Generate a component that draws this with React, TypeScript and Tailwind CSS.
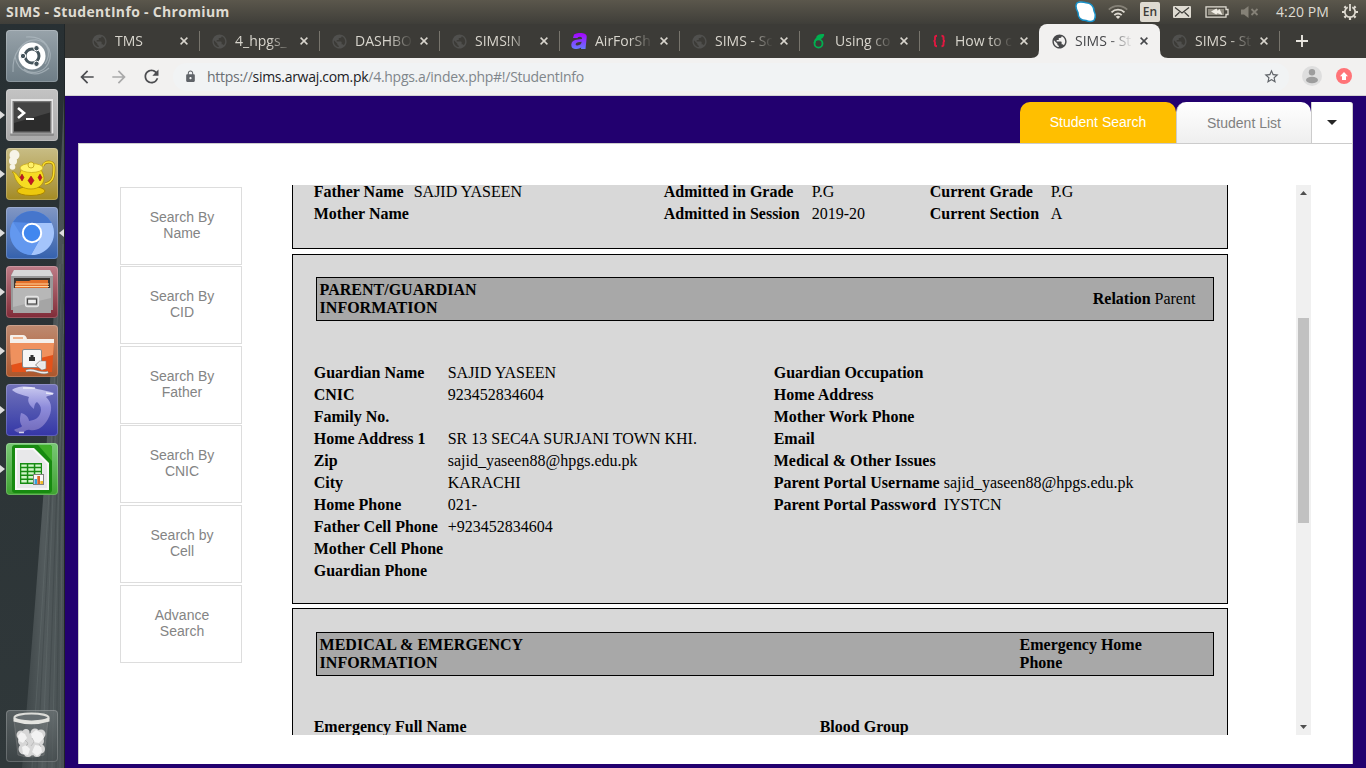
import React from "react";
import { MdPublic, MdLock, MdStarBorder, MdArrowBack, MdArrowForward, MdRefresh } from "react-icons/md";

/* ---------- System bar ---------- */

function SystemBar() {
  return (
    <header className="flex h-6 shrink-0 items-center justify-between bg-linear-to-b from-[#5b574c] to-[#3f3e39] pl-1.5 pr-2 font-['Open_Sans',sans-serif] text-[#dfdbd2]">
      <h1 className="text-[14px] leading-6 font-bold tracking-[0.32px]">SIMS - StudentInfo - Chromium</h1>
      <div className="flex h-6 items-center">
        <svg width="24" height="24" viewBox="0 0 24 24" className="mr-2.5">
          <path d="M3 3C6 .7 9 2.3 12 2.7c5 0 8 4 8 8.300 2 4 2 6 0 9.300-3 2-6 1-8 .2-5 0-8-3-8-8C1.500 8 1.500 5 3 3Z" fill="#fff" stroke="#1690c8" strokeWidth="1.500" />
        </svg>
        <svg width="20" height="24" viewBox="0 0 20 24" fill="none" strokeWidth="1.800" className="mr-3">
          <path d="M.8 9.700C6 4.600 14 4.600 19.200 9.700" stroke="#858177" />
          <path d="M3.500 12.400c3.700-3.600 9.300-3.600 13 0" stroke="#dfdbd2" />
          <path d="M6.300 15.200c2.200-2.100 5.200-2.100 7.400 0" stroke="#dfdbd2" />
          <path d="m10 19-2.300-2.300c1.300-1.200 3.300-1.200 4.600 0Z" fill="#dfdbd2" />
        </svg>
        <span className="mr-[13px] h-5 w-5 rounded-[2px] bg-[#dfdbd2] text-center text-[12px] leading-5 font-semibold text-[#3c3b37]">En</span>
        <svg width="18" height="12" viewBox="0 0 18 12" className="mr-3.5">
          <rect width="18" height="12" rx="1" fill="#dfdbd2" />
          <path d="m2 1.500 7 5.500 7-5.500M2 10.500l4.500-4.200M16 10.500l-4.500-4.200" stroke="#3c3b37" strokeWidth="1.200" fill="none" />
        </svg>
        <svg width="24" height="12" viewBox="0 0 24 12" className="mr-3">
          <path d="M1 .8h20v2.700h2v5h-2v2.700H1Z" fill="none" stroke="#dfdbd2" strokeWidth="1.300" />
          <path d="M3 3h16v6H3Z" fill="#8f8b80" />
          <path d="m6 5.500 5.500-3 1.200 2.300L14.500 3l3 6-5-1.800-1.300 1.300Z" fill="#f0ede5" />
        </svg>
        <svg width="18" height="12" viewBox="0 0 18 12" className="mr-[17px]">
          <path d="M0 3.500h3L7.500 0v12L3 8.500H0Z" fill="#858177" />
          <path d="m10.500 3 6 6m0-6-6 6" stroke="#858177" strokeWidth="1.800" />
        </svg>
        <span className="mr-[13px] w-[53px] text-[14px] leading-6 tracking-[0.1px] whitespace-nowrap">4:20 PM</span>
        <svg width="16" height="18" viewBox="-8 -9 16 18" fill="none" stroke="#dfdbd2">
          <path d="M-2.300-4.700a5.200 5.200 0 1 0 4.600 0" strokeWidth="1.800" />
          <path d="M0-8v7" strokeWidth="1.800" />
          <path d="M-5.500 0H-8M5.500 0H8M-4-4l-1.600-1.600M4-4l1.600-1.600M-4 4l-1.600 1.600M4 4l1.600 1.600M0 5.500V8" strokeWidth="2.200" />
        </svg>
      </div>
    </header>
  );
}

/* ---------- Launcher ---------- */

const Ubuntu = () => (
  <svg viewBox="0 0 52 52" className="h-full w-full">
    <path d="M7 42C6 24 16 9 31 10c11 2 15 13 8 24M20 7c18-2 29 13 22 27-5 9-17 11-24 5M9 26c2 16 20 24 34 12" fill="none" stroke="#b4bec5" strokeWidth="1.200" opacity=".65" />
    <circle cx="26" cy="26" r="13.500" fill="#fff" />
    <circle cx="26" cy="26" r="7" fill="none" stroke="#45545b" strokeWidth="3" />
    <g fill="#45545b" stroke="#fff" strokeWidth="1">
      <circle cx="17" cy="26" r="2.700" />
      <circle cx="30.500" cy="18.200" r="2.700" />
      <circle cx="30.500" cy="33.800" r="2.700" />
    </g>
  </svg>
);

const Terminal = () => (
  <svg viewBox="0 0 52 52" className="h-full w-full">
    <rect x="4" y="10" width="44" height="37" rx="1" fill="#8c8c8c" />
    <rect x="4.500" y="10" width="43" height="34.500" fill="#e6e6e6" />
    <rect x="6.500" y="12" width="39" height="32.500" fill="#777" />
    <rect x="8" y="13.500" width="36" height="29" fill="#2c2c2c" />
    <path d="M8 13.500h36v10L8 34Z" fill="#555" opacity=".6" />
    <path d="m12 19 6 5-6 5" fill="none" stroke="#fff" strokeWidth="2.600" />
    <path d="M20 30h8" stroke="#fff" strokeWidth="2" />
  </svg>
);

const Teapot = () => (
  <svg viewBox="0 0 52 52" className="h-full w-full">
    <path d="M37 18c1-5 11-6 11 1 0 8 0 15-9 17" fill="none" stroke="#a98400" strokeWidth="2.800" />
    <path d="M37 18c1-5 11-6 11 1 0 8 0 15-9 17" fill="none" stroke="#f8dd2e" strokeWidth="1.500" />
    <ellipse cx="25" cy="43" rx="14" ry="4.500" fill="#edc80d" stroke="#a98400" />
    <path d="M6 24c4-1 6 5 8 6-1-8 3-13 11-13s12 6 13 13c0 6-5 11-13 11s-12-4-15-9c-2-3-1-6-4-8Z" fill="#f6dc22" stroke="#b59408" strokeWidth=".8" />
    <ellipse cx="25.500" cy="20" rx="11.500" ry="4.500" fill="#fff266" stroke="#c8a510" strokeWidth=".7" />
    <circle cx="25" cy="17" r="3" fill="#fff06a" stroke="#b59408" strokeWidth=".7" />
    <path d="m25 28 3 4.500-3 4.500-3-4.500Zm-9-2 2 3.500-2 3.500-2-3.500Zm18 0 2 3.500-2 3.500-2-3.500Z" fill="#c51424" stroke="#841018" strokeWidth=".5" />
    <g fill="#f7f4e8"><circle cx="8.500" cy="7" r="5" /><circle cx="7" cy="13" r="4" /><circle cx="6.500" cy="19" r="2.800" /></g>
  </svg>
);

const Chromium = () => (
  <svg viewBox="0 0 52 52" className="h-full w-full">
    <circle cx="26" cy="26" r="22" fill="#568be5" />
    <path d="M7 15A22 22 0 0 1 45.600 16H26Z" fill="#4676cc" />
    <path d="M26 16h19.600A22 22 0 0 1 25 48l10-18Z" fill="#a4c4fb" />
    <path d="M7 15 17 31l16 3-8 14A22 22 0 0 1 7 15Z" fill="#6398ef" />
    <circle cx="26" cy="26" r="9.200" fill="#4187ef" stroke="#fff" strokeWidth="2" />
  </svg>
);

const Cabinet = () => (
  <svg viewBox="0 0 52 52" className="h-full w-full">
    <path d="M8 4h36l3 5v35H5V9Z" fill="#999" />
    <path d="M8 4h36l3 6H5Z" fill="#d8d8d8" />
    <path d="M8 12h36v10H8Z" fill="#3b3632" />
    <path d="M10 15h13l2-1h17v8H9Z" fill="#e4702a" />
    <path d="M9 18h34M9 20.500h34" stroke="#ffd6a0" />
    <path d="M7 22h38v25H7Z" fill="#a5a5a5" />
    <path d="M7 22h38v10L7 41Z" fill="#c3c3c3" opacity=".6" />
    <rect x="19.500" y="30.500" width="13" height="10" rx="2" fill="#b9b9b9" stroke="#e4e4e4" strokeWidth="1.300" />
    <rect x="21.500" y="33" width="9" height="5" fill="#eee" stroke="#4a4a4a" strokeWidth="1.200" />
  </svg>
);

const NetFolder = () => (
  <svg viewBox="0 0 52 52" className="h-full w-full">
    <path d="M4 11q0-1 1-1h12q3 0 4 4h27v6H4Z" fill="#f5f0eb" />
    <path d="M7 13h10" stroke="#eeb28d" strokeWidth="2" />
    <path d="M4 18h44l-2 29H6Z" fill="#e4521a" />
    <path d="M4 18h44l-1 12L5 40Z" fill="#f3ad7c" opacity=".7" />
    <rect x="16.500" y="24.500" width="19" height="18" rx="1.500" fill="#f6f6f6" stroke="#888" />
    <path d="M23 36v-4h1.500v-2h3v2H29v4Z" fill="#333" />
    <path d="M20 46c8-4 15 5 22 1M31 40l3-3h5v6l-3 1Z" fill="none" stroke="#8b8580" strokeWidth="2.600" />
    <path d="M20 46c8-4 15 5 22 1M31 40l3-3h5v6l-3 1Z" fill="#e8e8e8" stroke="#eee" strokeWidth="1.300" />
  </svg>
);

const Dolphin = () => (
  <svg viewBox="0 0 52 52" className="h-full w-full">
    <defs>
      <linearGradient id="dolphin" x1="0" y1="0" x2="0" y2="1">
        <stop offset="0" stopColor="#c9c9ef" />
        <stop offset=".45" stopColor="#8e8cdb" />
        <stop offset="1" stopColor="#716abb" />
      </linearGradient>
    </defs>
    <path d="M6 6c4-4 17-5 25-1 5 1 12 2 17 4-2 3-6 2-8 4 7 6 6 15 2 22-5 9-11 12-18 11-5-1-5 3-9 3-3 0-5-1-7-3 3-2 7-2 8-4-3-4-2-9-1-13 5 1 8 5 8 8 6-1 11-3 12-11 0-4-2-6-4-8-2 1-3 4-3 7-5-4-7-8-5-12C18 11 10 10 6 6Z" fill="url(#dolphin)" />
    <path d="M17 4h12M13 48.500h5M40 9l7 1" stroke="#fff" strokeWidth="1.500" opacity=".7" />
  </svg>
);

const Calc = () => (
  <svg viewBox="0 0 52 52" className="h-full w-full">
    <path d="M6 5q0-3 3-3h34q3 0 3 3v42q0 3-3 3H9q-3 0-3-3Z" fill="#178a10" />
    <path d="M32 2h11q3 0 3 3v13Z" fill="#3eae28" />
    <path d="M9 5h19l15 15v27H9Z" fill="#f7f7f7" />
    <path d="M11 7h16l14 14v24H11Z" fill="#e8e8ea" />
    <path d="M14 20h22v21H14Z" fill="#168b13" />
    <path d="M15.300 21.400h5.500v2.400h-5.500zm7 0h5.500v2.400h-5.500zm7 0h5.500v2.400h-5.500zM15.300 25.300h5.500v2.400h-5.500zm7 0h5.500v2.400h-5.500zm7 0h5.500v2.400h-5.500zM15.300 29.200h5.500v2.400h-5.500zm7 0h5.500v2.400h-5.500zm7 0h5.500v2.400h-5.500zM15.300 33.100h5.500v2.400h-5.500zm7 0h5.500v2.400h-5.500zM15.300 37h5.500v2.400h-5.500zm7 0h5.500v2.400h-5.500z" fill="#d0f5c8" />
    <rect x="27.500" y="31.500" width="10" height="10" fill="#f8f8f8" stroke="#808080" />
    <path d="M28.500 36h2.500v5h-2.500z" fill="#31a2df" /><path d="M31.300 33H34v8h-2.700z" fill="#d86428" /><path d="M34.300 38H37v3h-2.700z" fill="#f0ba28" />
  </svg>
);

const Trash = () => (
  <svg viewBox="0 0 52 52" className="h-full w-full">
    <path d="m8 10 4 35q12 4 26 0l4-35Z" fill="#aaa" fillOpacity=".15" stroke="#999" strokeOpacity=".35" />
    <g fill="#d6d6d6">
      <circle cx="15" cy="25" r="4.500" /><circle cx="20" cy="22.500" r="3.500" /><circle cx="29" cy="23" r="4.500" /><circle cx="35" cy="24" r="4.500" />
      <circle cx="17" cy="31" r="5" /><circle cx="25" cy="29" r="6" /><circle cx="33" cy="31" r="5" /><circle cx="18" cy="39" r="5.500" />
      <circle cx="26" cy="39" r="6.500" /><circle cx="34" cy="39" r="5" /><circle cx="22" cy="43" r="4" /><circle cx="31" cy="43" r="4" />
    </g>
    <g fill="#f2f2f2">
      <path d="m12 26 3-4 4 2 2 4-4 5-4-2Zm13-2 5-4 6 3 2 5-5 5-6-1Zm-9 13 4-2 4 4-2 6-5-1Zm13-2 6 1 1 6-5 4-5-4Z" />
    </g>
    <path d="m19 30 3 3-2 3m6-8 2 4-3 4m8-2 2 3" fill="none" stroke="#bcbcbc" />
    <ellipse cx="25.500" cy="7.500" rx="17" ry="4" fill="#666d70" stroke="#dcdcd8" strokeWidth="2.200" />
    <path d="M7.500 8v3.500q18 5.500 36 0V8q-18 6.500-36 0Z" fill="#e4e4e0" />
  </svg>
);

const launcherApps = [
  { name: "Dash", icon: Ubuntu, tile: "from-[#98a3aa] to-[#6e7d86]", running: false, focused: false },
  { name: "Terminal", icon: Terminal, tile: "from-[#c3c3c3] to-[#a9a9a9]", running: true, focused: false },
  { name: "Teapot", icon: Teapot, tile: "from-[#c8bd85] to-[#a48b20]", running: true, focused: false },
  { name: "Chromium", icon: Chromium, tile: "from-[#8297c4] to-[#3461ad]", running: true, focused: true },
  { name: "Files", icon: Cabinet, tile: "from-[#bd7c87] to-[#802b38]", running: true, focused: false },
  { name: "Network folder", icon: NetFolder, tile: "from-[#bd8a70] to-[#ac562b]", running: true, focused: false },
  { name: "Workbench", icon: Dolphin, tile: "from-[#7373ba] to-[#3535a6]", running: true, focused: false },
  { name: "Spreadsheet", icon: Calc, tile: "from-[#79c875] to-[#3da22f]", running: true, focused: false },
];

function Launcher() {
  return (
    <aside className="relative flex w-[65px] shrink-0 flex-col justify-between overflow-hidden bg-linear-to-b from-[#283033] to-[#30383a] pt-1.5 pb-1.5">
      <svg className="absolute inset-0 h-full w-full" viewBox="0 0 65 744" preserveAspectRatio="none">
        <defs>
          <linearGradient id="curtain" x1="0" x2="1"><stop stopColor="#3c4446" /><stop offset=".5" stopColor="#525a5c" /><stop offset="1" stopColor="#495153" /></linearGradient>
        </defs>
        <path d="M65 50 57 230 45 450 35 580 22 744h43Z" fill="url(#curtain)" />
        <path d="M60 240 49 470 32 744M63 220 53 470 42 744M64 280 58 490 52 744M64.500 320 62 500 60 744" fill="none" stroke="#6a7274" opacity=".4" />
        <path d="M62 240 51 470 37 744M64 260 56 490 47 744M64 310 60 490 56 744" fill="none" stroke="#3c4446" opacity=".5" />
        <path d="M64.500 0v744" stroke="#202628" />
      </svg>
      <nav className="relative flex flex-col gap-[7px]">
        {launcherApps.map(({ name, icon: Icon, tile, running, focused }) => (
          <div key={name} className="flex h-[52px] items-center">
            <span className="w-1.5">
              {running && <svg width="5" height="8" viewBox="0 0 5 8" className="block"><path d="m0 0 5 4-5 4Z" fill="#ddd" /></svg>}
            </span>
            <div className={`h-[52px] w-[52px] overflow-hidden rounded-[4px] bg-linear-to-b ring-1 ring-white/20 ring-inset ${tile}`}><Icon /></div>
            {focused && <svg width="5" height="8" viewBox="0 0 5 8" className="ml-px block"><path d="m5 0-5 4 5 4Z" fill="#ddd" /></svg>}
          </div>
        ))}
      </nav>
      <div className="relative ml-1.5 h-[52px] w-[52px] rounded-[4px] bg-linear-to-b from-[#737a7c]/60 to-[#454c4e]/60 ring-1 ring-white/20 ring-inset"><Trash /></div>
    </aside>
  );
}

/* ---------- Browser chrome ---------- */

const tabs = [
  { title: "TMS", icon: "globe" },
  { title: "4_hpgs_", icon: "globe" },
  { title: "DASHBO", icon: "globe" },
  { title: "SIMS!N", icon: "globe" },
  { title: "AirForSh", icon: "air" },
  { title: "SIMS - Sc", icon: "globe" },
  { title: "Using co", icon: "six" },
  { title: "How to c", icon: "braces" },
  { title: "SIMS - St", icon: "globe", active: true },
  { title: "SIMS - St", icon: "globe" },
];

function TabIcon({ kind, active }: { kind: string; active?: boolean }) {
  if (kind === "air")
    return (
      <svg width="16" height="16" viewBox="0 0 16 16" className="-ml-px shrink-0">
        <defs><linearGradient id="air" x1="0" y1="0" x2="0" y2="1"><stop stopColor="#a800ff" /><stop offset="1" stopColor="#6677ff" /></linearGradient></defs>
        <path fillRule="evenodd" d="M3 1.500Q7-.7 12 .2q4 .6 3.700 4L14.500 16H10l.2-1.500Q7 16.700 3 15.700.2 15 .3 11.500.5 7 7 6.400l4-.3q.5-2.300-2-2.300-2 0-2.600 1.200H2ZM10.700 8.800 7 9.200q-2.300.3-2.400 2 0 1.500 2 1.300 3.500-.3 4.100-3.700Z" fill="url(#air)" />
      </svg>
    );
  if (kind === "six")
    return (
      <svg width="15" height="16" viewBox="0 0 15 16" fill="none" stroke="#00b050" strokeWidth="1.800" className="shrink-0">
        <ellipse cx="6.500" cy="10.500" rx="4" ry="4.100" /><path d="M2.500 10C3 6 5.500 3.500 12 2M5 4.500c1-2 3-3 7-2.500M6 6.500c2-1 4-1.500 5-3.500" />
      </svg>
    );
  if (kind === "braces")
    return (
      <svg width="15" height="16" viewBox="0 0 15 16" fill="none" stroke="#e01840" strokeWidth="1.900" className="shrink-0">
        <path d="M5 2.800q-2 0-2 1.700v2Q3 8 1.500 8 3 8 3 9.500v2q0 1.700 2 1.700M9.500 2.800q2 0 2 1.700v2Q11.500 8 13 8q-1.500 0-1.500 1.500v2q0 1.700-2 1.700" />
      </svg>
    );
  return <MdPublic size={17} className={`-ml-[1.5px] shrink-0 ${active ? "text-[#48494b]" : "text-[#50504e]"}`} />;
}

function TabStrip() {
  return (
    <div className="flex h-[34px] items-center bg-[#3c3b37] pl-[15px] font-['Open_Sans',sans-serif]">
      {tabs.map(({ title, icon, active }, i) => (
        <div
          key={i}
          className={`relative flex h-[34px] shrink-0 items-center ${active ? "-ml-px w-[121px] rounded-t-lg bg-[#f2f1f0] pl-[13px] text-[#46474a]" : "w-[120px] pl-3 text-[#d8d5cd]"}`}
        >
          {active && (
            <>
              <svg className="absolute bottom-0 -left-2" width="8" height="8"><path d="M8 0v8H0Q8 8 8 0Z" fill="#f2f1f0" /></svg>
              <svg className="absolute -right-2 bottom-0" width="8" height="8"><path d="M0 0v8h8Q0 8 0 0Z" fill="#f2f1f0" /></svg>
            </>
          )}
          <div className="flex w-[23px] items-center"><TabIcon kind={icon} active={active} /></div>
          <span className="w-[58px] overflow-hidden text-[14px] leading-6 whitespace-nowrap [mask-image:linear-gradient(to_right,black_58%,transparent)]">{title}</span>
          <svg width="8" height="8" viewBox="0 0 8 8" className="ml-[7px] shrink-0"><path d="m.6.6 6.800 6.800m0-6.800L.6 7.400" stroke="currentColor" strokeWidth="1.500" /></svg>
          {!active && i !== 7 && <i className="ml-[11px] h-5 w-px bg-[#77746c]" />}
        </div>
      ))}
      <svg width="12" height="12" viewBox="0 0 12 12" className="ml-4"><path d="M6 0v12M0 6h12" stroke="#e9e6df" strokeWidth="1.900" /></svg>
    </div>
  );
}

function Toolbar() {
  return (
    <div className="flex h-[38px] items-center border-b border-[#d3d2d2] bg-[#f2f1f0] pl-3 font-['Open_Sans',sans-serif] text-[#4c4d50]">
      <MdArrowBack size={20} />
      <MdArrowForward size={20} className="ml-3 text-[#a9a9a9]" />
      <MdRefresh size={21} className="ml-[12px]" />
      <div className="ml-[11px] flex h-7 w-[1116px] items-center rounded-full bg-[#f1f3f4]">
        <MdLock size={13} className="mb-px ml-[11px] text-[#5f6368]" />
        <span className="ml-[10px] grow text-[14px] leading-7 tracking-[-0.28px] text-[#80868b]">
          <span className="text-[#6a6e73]">https://</span><span className="text-[#202124]">sims.arwaj.com.pk</span>/4.hpgs.a/index.php#!/StudentInfo
        </span>
        <MdStarBorder size={17} className="mr-[9px] text-[#5f6368]" />
      </div>
      <svg width="20" height="20" viewBox="0 0 20 20" className="mb-px ml-[13px]"><circle cx="10" cy="10" r="10" fill="#dedede" /><g fill="#9d9d9d"><circle cx="10" cy="6.200" r="3.200" /><ellipse cx="10" cy="14" rx="6" ry="3.200" /></g></svg>
      <svg width="16" height="16" viewBox="0 0 16 16" className="mb-px ml-3.5"><circle cx="8" cy="8" r="8" fill="#ff7377" /><path d="m8 4-4 4.300h2V12h4V8.300h2Z" fill="#fff" /></svg>
    </div>
  );
}

/* ---------- Page ---------- */

const searches = [["Search By", "Name"], ["Search By", "CID"], ["Search By", "Father"], ["Search By", "CNIC"], ["Search by", "Cell"], ["Advance", "Search"]];

function Fields({ rows, cols }: { rows: string[][]; cols: string }) {
  return (
    <dl className={`grid auto-rows-[22px] leading-[22px] whitespace-nowrap ${cols}`}>
      {rows.map(([label, value]) => (
        <React.Fragment key={label}>
          <dt className="font-bold">{label}</dt>
          <dd>{value}</dd>
        </React.Fragment>
      ))}
    </dl>
  );
}

const guardianLeft = [
  ["Guardian Name", "SAJID YASEEN"],
  ["CNIC", "923452834604"],
  ["Family No.", ""],
  ["Home Address 1", "SR 13 SEC4A SURJANI TOWN KHI."],
  ["Zip", "sajid_yaseen88@hpgs.edu.pk"],
  ["City", "KARACHI"],
  ["Home Phone", "021-"],
  ["Father Cell Phone", "+923452834604"],
  ["Mother Cell Phone", ""],
  ["Guardian Phone", ""],
];

const guardianRight = [
  ["Guardian Occupation", ""],
  ["Home Address", ""],
  ["Mother Work Phone", ""],
  ["Email", ""],
  ["Medical & Other Issues", ""],
  ["Parent Portal Username", "sajid_yaseen88@hpgs.edu.pk"],
  ["Parent Portal Password", "IYSTCN"],
];

function StudentDetails() {
  return (
    <div className="h-[550px] w-[936px] overflow-hidden font-['Liberation_Serif',serif] text-[16px] text-black">
      <section className="-mt-1 flex h-[68px] border border-t-0 border-black bg-[#d8d8d8] pl-[20.7px]">
        <div className="w-[350px]"><Fields cols="grid-cols-[100px_auto]" rows={[["Father Name", "SAJID YASEEN"], ["Mother Name", ""]]} /></div>
        <div className="w-[266px]"><Fields cols="grid-cols-[148px_auto]" rows={[["Admitted in Grade", "P.G"], ["Admitted in Session", "2019-20"]]} /></div>
        <Fields cols="grid-cols-[121px_auto]" rows={[["Current Grade", "P.G"], ["Current Section", "A"]]} />
      </section>
      <section className="mt-[5px] h-[350px] border border-black bg-[#d8d8d8] pt-[22px]">
        <div className="ml-[23px] flex h-11 w-[898px] items-center justify-between border border-black bg-[#a8a8a8] pr-[17.6px] pl-[2.6px] leading-[18px]">
          <h2 className="w-[200px] font-bold">PARENT/GUARDIAN INFORMATION</h2>
          <p><b>Relation</b> Parent</p>
        </div>
        <div className="mt-[41px] flex pl-[20.7px]">
          <div className="w-[460px]"><Fields cols="grid-cols-[134px_auto]" rows={guardianLeft} /></div>
          <Fields cols="grid-cols-[170px_auto]" rows={guardianRight} />
        </div>
      </section>
      <section className="mt-1 h-[350px] border border-black bg-[#d8d8d8] pt-[23px]">
        <div className="ml-[23px] flex h-11 w-[898px] items-center justify-between border border-black bg-[#a8a8a8] pl-[2.6px] leading-[18px] font-bold">
          <h2 className="w-[240px]">MEDICAL &amp; EMERGENCY INFORMATION</h2>
          <p className="w-[193.4px] pr-[60px]">Emergency Home Phone</p>
        </div>
        <div className="mt-10 flex pl-[20.7px] leading-[22px] font-bold">
          <p className="w-[506px]">Emergency Full Name</p>
          <p>Blood Group</p>
        </div>
      </section>
    </div>
  );
}

function ScrollBar() {
  return (
    <div className="ml-[68px] flex h-[550px] w-[15px] flex-col items-center bg-[#f0f0f0] py-1.5">
      <svg width="7" height="4" viewBox="0 0 7 4"><path d="M0 4 3.500 0 7 4Z" fill="#505050" /></svg>
      <div className="mt-[123px] h-[205px] w-[11px] bg-[#c1c1c1]" />
      <svg width="7" height="4" viewBox="0 0 7 4" className="mt-auto"><path d="M0 0h7L3.500 4Z" fill="#505050" /></svg>
    </div>
  );
}

function Page() {
  return (
    <main className="flex grow flex-col bg-[#22006f] pr-[13px] pb-1 pl-[13px] font-['Liberation_Sans',sans-serif] text-[14px]">
      <div className="flex h-[47px] justify-end pt-1.5">
        <button className="h-[41px] w-[156px] rounded-t-[10px] bg-[#ffbf00] text-white">Student Search</button>
        <button className="h-[41px] w-[135px] rounded-t-[10px] border-l border-[#ccc] bg-linear-to-b from-white to-[#efefef] pt-0.5 text-[#808080]">Student List</button>
        <button className="flex h-[41px] w-[42px] items-center justify-center rounded-tr-[3px] border-x border-[#ccc] bg-white">
          <svg width="10" height="5" viewBox="0 0 10 5"><path d="M0 0h10L5 5Z" fill="#262626" /></svg>
        </button>
      </div>
      <div className="flex grow border border-b-0 border-[#ccc] bg-white pl-[41px]">
        <nav className="flex flex-col gap-[1.6px] pt-[42.6px]">
          {searches.map(([a, b], i) => (
            <button key={i} className="h-[78px] w-[122px] border border-[#ddd] pb-0.5 pl-[2px] leading-4 text-[#848484]">{a}<br />{b}</button>
          ))}
        </nav>
        <div className="ml-[50px] flex pt-[41px]">
          <StudentDetails />
          <ScrollBar />
        </div>
      </div>
    </main>
  );
}

export default function App() {
  return (
    <div className="flex h-[768px] w-[1366px] flex-col overflow-hidden">
      <SystemBar />
      <div className="flex min-h-0 grow">
        <Launcher />
        <div className="flex w-[1301px] flex-col">
          <TabStrip />
          <Toolbar />
          <Page />
        </div>
      </div>
    </div>
  );
}
